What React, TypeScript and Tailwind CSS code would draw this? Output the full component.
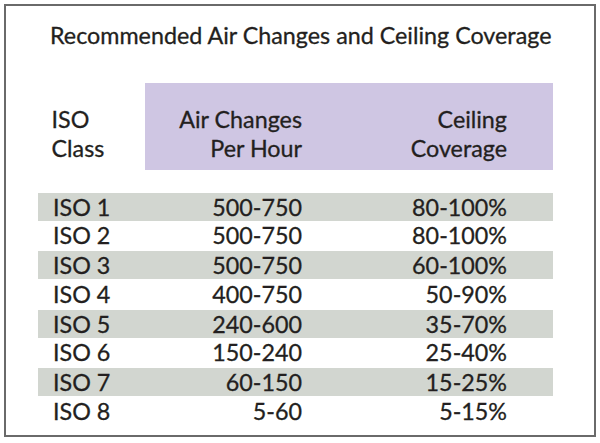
const rows = [
  { iso: 'ISO 1', air: '500-750', ceiling: '80-100%' },
  { iso: 'ISO 2', air: '500-750', ceiling: '80-100%' },
  { iso: 'ISO 3', air: '500-750', ceiling: '60-100%' },
  { iso: 'ISO 4', air: '400-750', ceiling: '50-90%' },
  { iso: 'ISO 5', air: '240-600', ceiling: '35-70%' },
  { iso: 'ISO 6', air: '150-240', ceiling: '25-40%' },
  { iso: 'ISO 7', air: '60-150', ceiling: '15-25%' },
  { iso: 'ISO 8', air: '5-60', ceiling: '5-15%' },
];

export default function App() {
  return (
    <div className="w-[600px] h-[443px] bg-white pt-[4px] pl-[4px] font-['Lato',sans-serif] text-[#231f20] text-[23.3px] leading-[29px] [-webkit-text-stroke:0.3px_#231f20]">
      <div className="w-[592px] h-[433px] border-2 border-[#6a6a6a] box-border">
        <h1 className="mt-[15px] pl-[44px] font-normal">
          Recommended Air Changes and Ceiling Coverage
        </h1>

        <div className="mt-[33px] ml-[32px] w-[515px] h-[87px] flex">
          <div className="w-[107px] pl-[13.5px] flex flex-col justify-end pb-[7.5px]">
            <div>ISO</div>
            <div>Class</div>
          </div>
          <div className="flex-1 bg-[#cfc6e3] grid grid-cols-[157px_205px] items-end pb-[7.5px]">
            <div className="text-right">
              <div>Air Changes</div>
              <div>Per Hour</div>
            </div>
            <div className="text-right">
              <div>Ceiling</div>
              <div>Coverage</div>
            </div>
          </div>
        </div>

        <div className="mt-[22.7px] ml-[32px] w-[515px]">
          {rows.map((row, i) => (
            <div
              key={row.iso}
              className={
                i % 2 === 0
                  ? 'grid grid-cols-[107px_157px_205px] h-[28px] items-center bg-[#d2d6d0]'
                  : 'grid grid-cols-[107px_157px_205px] h-[30.5px] items-center'
              }
            >
              <div className="pl-[15px]">{row.iso}</div>
              <div className="text-right">{row.air}</div>
              <div className="text-right">{row.ceiling}</div>
            </div>
          ))}
        </div>
      </div>
    </div>
  );
}
